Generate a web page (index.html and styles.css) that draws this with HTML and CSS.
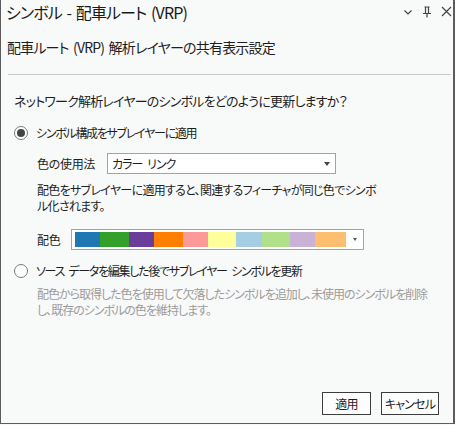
FILE: index.html
```html
<!DOCTYPE html>
<html lang="ja">
<head>
<meta charset="utf-8">
<link rel="stylesheet" href="styles.css">
</head>
<body>
<div class="window">
  <div class="titlebar">
    <div class="title">シンボル - 配車ルート (VRP)</div>
    <div class="tb-icons">
      <svg class="ic" width="10" height="10" viewBox="0 0 10 10"><path d="M1.5 3.5 L5 7 L8.5 3.5" fill="none" stroke="#444" stroke-width="1.2"/></svg>
      <svg class="ic" width="10" height="12" viewBox="0 0 10 12"><path d="M2.5 1 H7.5 M3.5 1 V7.5 M6.5 1 V7.5 M1 7.5 H9 M5 7.5 V11.5" fill="none" stroke="#444" stroke-width="1.2"/></svg>
      <svg class="ic" width="11" height="11" viewBox="0 0 11 11"><path d="M1 1 L10 10 M10 1 L1 10" fill="none" stroke="#444" stroke-width="1.2"/></svg>
    </div>
  </div>
  <div class="heading">配車ルート (VRP) 解析レイヤーの共有表示設定</div>
  <div class="sep"></div>
  <div class="question">ネットワーク解析レイヤーのシンボルをどのように更新しますか？</div>
  <div class="radio-row first">
    <span class="radio checked"></span>
    <span class="radio-label">シンボル構成をサブレイヤーに適用</span>
  </div>
  <div class="field-row usage">
    <span class="field-label">色の使用法</span>
    <div class="select">
      <span class="select-text">カラー リンク</span>
      <span class="caret"></span>
    </div>
  </div>
  <div class="desc">配色をサブレイヤーに適用すると、関連するフィーチャが同じ色でシンボ<br>ル化されます。</div>
  <div class="field-row scheme">
    <span class="field-label">配色</span>
    <div class="palette">
      <div class="swatches">
        <span class="sw sw1"></span><span class="sw sw2"></span><span class="sw sw3"></span><span class="sw sw4"></span><span class="sw sw5"></span><span class="sw sw6"></span><span class="sw sw7"></span><span class="sw sw8"></span><span class="sw sw9"></span><span class="sw sw10"></span>
      </div>
      <span class="caret small"></span>
    </div>
  </div>
  <div class="radio-row second">
    <span class="radio"></span>
    <span class="radio-label">ソース データを編集した後でサブレイヤー シンボルを更新</span>
  </div>
  <div class="desc gray">配色から取得した色を使用して欠落したシンボルを追加し、未使用のシンボルを削除<br>し、既存のシンボルの色を維持します。</div>
  <div class="footer">
    <button class="btn apply">適用</button>
    <button class="btn cancel">キャンセル</button>
  </div>
</div>
</body>
</html>
```

FILE: styles.css
```css
html, body {
  margin: 0;
  padding: 0;
  background: #f8f9f9;
}
body {
  font-family: "Noto Sans CJK JP", "Noto Sans", sans-serif;
  font-feature-settings: "palt";
  color: #1e1e1e;
}
.window {
  box-sizing: border-box;
  width: 455px;
  height: 424px;
  border-left: 1px solid #5c5c5c;
  border-right: 2px solid #5c5c5c;
  border-bottom: 1px solid #5c5c5c;
  background: #f8f9f9;
  display: flex;
  flex-direction: column;
}
.titlebar {
  height: 23px;
  display: flex;
  align-items: center;
  justify-content: space-between;
  padding-left: 5px;
}
.title {
  font-size: 16px;
  line-height: 22px;
  letter-spacing: -0.9px;
  word-spacing: 2px;
  color: #1a1a1a;
}
.tb-icons {
  display: flex;
  align-items: center;
  gap: 9px;
  padding-right: 1px;
}
.heading {
  margin-top: 14px;
  padding-left: 6px;
  font-size: 14px;
  line-height: 20px;
  letter-spacing: -0.8px;
  word-spacing: 2px;
}
.sep {
  margin: 17px 2px 0 7px;
  height: 1px;
  background: #c9c9c9;
}
.question {
  margin-top: 16px;
  padding-left: 13px;
  font-size: 13px;
  line-height: 20px;
  letter-spacing: -0.8px;
  white-space: nowrap;
}
.radio-row {
  display: flex;
  align-items: center;
  height: 20px;
  padding-left: 13px;
  font-size: 12px;
  letter-spacing: -1.3px;
  white-space: nowrap;
}
.radio-row.first { margin-top: 12px; }
.radio-row.second { margin-top: 11px; }
.radio-row.second .radio-label { word-spacing: 3px; }
.radio {
  box-sizing: border-box;
  flex: none;
  width: 14px;
  height: 14px;
  border: 1px solid #7a7a7a;
  border-radius: 50%;
  background: #ffffff;
  display: flex;
  align-items: center;
  justify-content: center;
  margin-right: 8px;
}
.radio.checked::after {
  content: "";
  width: 8px;
  height: 8px;
  border-radius: 50%;
  background: #444444;
}
.radio-label { line-height: 20px; }
.field-row {
  display: flex;
  align-items: center;
  padding-left: 36px;
  font-size: 12px;
}
.field-row.usage { margin-top: 10px; }
.field-row.scheme { margin-top: 15px; }
.field-label { line-height: 21px; letter-spacing: -0.3px; }
.usage .field-label { width: 70px; }
.scheme .field-label { width: 34px; }
.select {
  box-sizing: border-box;
  width: 229px;
  height: 21px;
  border: 1px solid #a3a3a3;
  background: #ffffff;
  display: flex;
  align-items: center;
  justify-content: space-between;
  padding: 0 5px 0 4px;
}
.select-text { font-size: 12px; letter-spacing: -1px; word-spacing: 3px; }
.caret {
  width: 0;
  height: 0;
  border-left: 3px solid transparent;
  border-right: 3px solid transparent;
  border-top: 4px solid #444;
}
.caret.small {
  border-left-width: 2.5px;
  border-right-width: 2.5px;
  border-top-width: 3px;
  border-top-color: #555;
  margin-right: 3px;
}
.desc {
  margin-top: 8px;
  padding-left: 36px;
  font-size: 12px;
  line-height: 16px;
  letter-spacing: -0.7px;
  white-space: nowrap;
}
.desc.gray {
  margin-top: 5px;
  line-height: 16px;
  letter-spacing: -1px;
  color: #9c9c9c;
}
.palette {
  box-sizing: border-box;
  width: 293px;
  height: 21px;
  border: 1px solid #a3a3a3;
  background: #ffffff;
  display: flex;
  align-items: center;
  justify-content: space-between;
  padding: 0 3px 0 3px;
}
.swatches {
  display: flex;
  height: 15px;
}
.sw { display: block; height: 15px; }
.sw1 { width: 25px; background: #1f78b4; }
.sw2 { width: 29px; background: #33a02c; }
.sw3 { width: 25px; background: #6a3d9a; }
.sw4 { width: 29px; background: #ff7f00; }
.sw5 { width: 25px; background: #fb9a99; }
.sw6 { width: 28px; background: #ffff99; }
.sw7 { width: 26px; background: #a6cee3; }
.sw8 { width: 28px; background: #b2df8a; }
.sw9 { width: 25px; background: #cab2d6; }
.sw10 { width: 31px; background: #fdbf6f; }
.footer {
  margin-top: auto;
  display: flex;
  justify-content: flex-end;
  gap: 10px;
  padding: 0 14px 8px 0;
}
.btn {
  box-sizing: border-box;
  height: 23px;
  border: 1px solid #3c3c3c;
  background: #fdfdfd;
  font-family: "Noto Sans CJK JP", sans-serif;
  font-feature-settings: "palt";
  font-size: 12px;
  letter-spacing: -0.8px;
  color: #1e1e1e;
  padding: 0;
  border-radius: 0;
}
.btn.apply { width: 49px; }
.btn.cancel { width: 58px; }
```
